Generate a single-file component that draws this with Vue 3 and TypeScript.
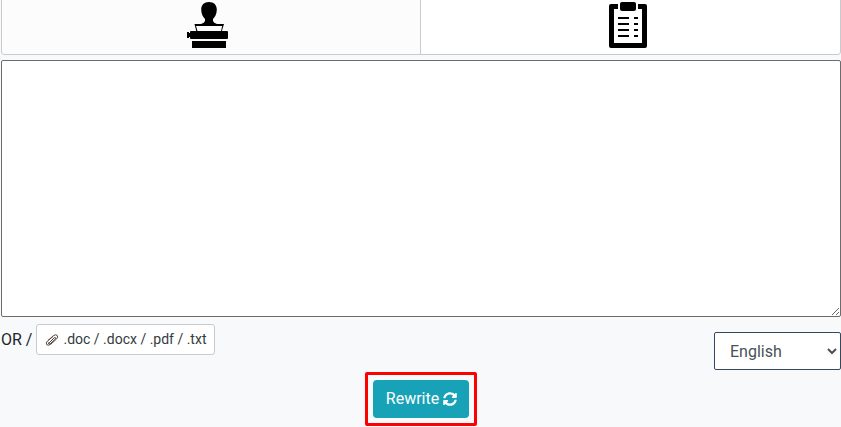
<script setup lang="ts">
import { ref } from 'vue'

type Mode = 'type' | 'paste'

const mode = ref<Mode>('paste')
const text = ref('')
const language = ref('English')
const languages = ['English', 'French', 'German', 'Spanish']
</script>

<template>
  <main class="page">
    <div class="tabs" role="tablist">
      <button
        class="tab"
        :class="{ active: mode === 'type' }"
        type="button"
        role="tab"
        aria-label="Write"
        :aria-selected="mode === 'type'"
        @click="mode = 'type'"
      >
        <svg width="42" height="48" viewBox="0 0 42 48" aria-hidden="true">
          <path d="M22 2C17 2 14.200 5 14.200 9.500C14.200 14 16 17 18 19V21Q17.500 23 14 24H7.500L9.500 32H34.500L37 24H30Q26.500 23 26 21V19C28 17 29.800 14 29.800 9.500C29.800 5 27 2 22 2Z" />
          <path class="sheet" d="M9 26H35.200L34 31H10.500Z" />
          <path d="M4 31H40Q41 31 41 32V38Q41 39 40 39H4Q3 39 3 38V37H2V38H0V32H2V33H3V32Q3 31 4 31Z" />
          <path d="M5 41H39V48H5Z" />
        </svg>
      </button>
      <button
        class="tab"
        :class="{ active: mode === 'paste' }"
        type="button"
        role="tab"
        aria-label="Paste"
        :aria-selected="mode === 'paste'"
        @click="mode = 'paste'"
      >
        <svg width="38" height="48" viewBox="0 0 38 48" aria-hidden="true">
          <path d="M2 4H9V9H5V43H33V9H29V4H36Q38 4 38 6V46Q38 48 36 48H2Q0 48 0 46V6Q0 4 2 4Z" />
          <rect x="11" y="2" width="16" height="9" rx="2" />
          <path d="M9 17H20V19H9ZM9 23H20V25H9ZM9 29H20V31H9ZM9 35H20V37H9ZM25 17H29V19H25ZM25 23H29V25H25ZM25 29H29V31H25ZM25 35H29V37H25Z" />
        </svg>
      </button>
    </div>

    <textarea v-model="text" class="editor" aria-label="Text to rewrite"></textarea>

    <div class="options">
      <div class="upload">
        <span>OR /</span>
        <button class="file" type="button">
          <svg width="14" height="14" viewBox="0 0 14 14" aria-hidden="true">
            <path d="M3 7.500L8 3Q10.500 1 12 2.200Q13.500 4 11.500 6L6 11Q3.500 13 1.800 11.800Q0.500 10 2.500 8L8 3.500M3.500 10.500L9.500 4.500Q11 4 10.300 6L5 11Q3 11.500 3.500 9.500" />
          </svg>
          .doc / .docx / .pdf / .txt
        </button>
      </div>
      <select v-model="language" class="language" aria-label="Language">
        <option v-for="item in languages" :key="item">{{ item }}</option>
      </select>
    </div>

    <div class="actions">
      <div class="highlight">
        <button class="rewrite" type="button">
          Rewrite
          <svg width="14" height="14" viewBox="0 0 512 512" aria-hidden="true">
            <path d="M371 134c-31-29-72-45-115-45-78 0-145 53-163 127-1 5-6 9-12 9H24c-7 0-13-7-12-14C33 94 134 8 256 8c66 0 127 26 171 69l36-36c15-15 41-4 41 17v134c0 13-11 24-24 24H346c-21 0-32-26-17-41zM32 296h134c21 0 32 26 17 41l-42 41c31 29 72 45 115 45 78 0 145-53 163-127 1-5 6-9 12-9h57c7 0 13 7 12 14-21 117-122 203-244 203-66 0-127-26-171-69l-36 36c-15 15-41 4-41-17V320c0-13 11-24 24-24z" />
          </svg>
        </button>
      </div>
    </div>
  </main>
</template>

<style>
body {
  margin: 0;
  background: #f8f9fb;
}
</style>

<style scoped>
.page,
.page * {
  box-sizing: border-box;
}

.page {
  padding-left: 1px;
  color: #212529;
  font: 16px/24px Roboto, sans-serif;
}

button,
select,
textarea {
  margin: 0;
  font-family: inherit;
}

.tabs {
  display: grid;
  grid-template-columns: 1fr 1fr;
  border: 1px solid #c8cacd;
  border-top: 0;
  border-radius: 0 0 4px 4px;
  overflow: hidden;
}

.tab {
  display: flex;
  justify-content: center;
  height: 54px;
  padding: 0 6px 0 0;
  border: 0;
  background: #fcfcfc;
}

.tab:first-child {
  border-right: 1px solid #c8cacd;
}

.tab.active {
  background: #fff;
}

.tab svg {
  flex: none;
}

.sheet {
  fill: #fcfcfc;
}

.editor {
  display: block;
  width: 100%;
  height: 257px;
  margin-top: 5px;
  padding: 8px;
  border: 1px solid #6c6c6c;
  border-radius: 2px;
  background: #fff;
  color: inherit;
  font-size: 16px;
  resize: vertical;
}

.options {
  display: flex;
  justify-content: space-between;
  align-items: flex-end;
  padding-top: 7px;
}

.upload {
  display: flex;
  align-items: center;
  gap: 4px;
  align-self: flex-start;
}

.file {
  display: flex;
  align-items: center;
  gap: 4px;
  height: 31px;
  padding: 0 8px;
  border: 1px solid #c8cacd;
  border-radius: 3px;
  background: #fff;
  color: #343a40;
  font-size: 14px;
  line-height: 21px;
}

.file svg {
  fill: none;
  stroke: #5a4644;
  stroke-width: 1;
}

.language {
  width: 127px;
  height: 38px;
  margin-top: 8px;
  padding: 0 0 0 11px;
  border: 1px solid #34495e;
  border-radius: 2px;
  background: #fff;
  color: #495057;
  font-size: 16px;
}

.actions {
  display: flex;
  justify-content: center;
  padding-top: 2px;
}

.highlight {
  padding: 5px;
  border: 3px solid #fe0000;
  border-radius: 2px;
}

.rewrite {
  display: flex;
  align-items: center;
  gap: 4px;
  height: 38px;
  padding: 0 12px 0 13px;
  border: 0;
  border-radius: 4px;
  background: #17a2b8;
  color: #fff;
  font-size: 16px;
  line-height: 24px;
}

.rewrite svg {
  fill: currentColor;
}
</style>
